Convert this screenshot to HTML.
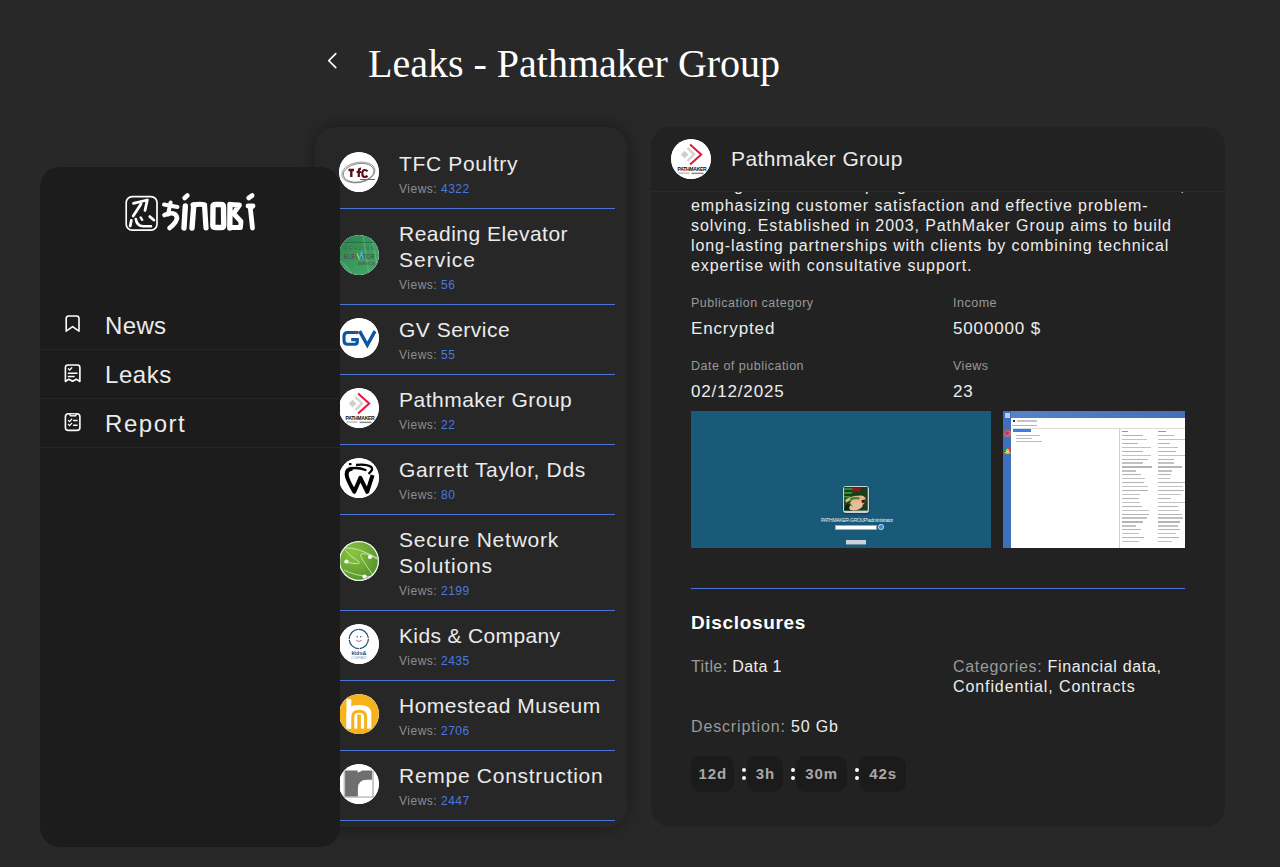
<!DOCTYPE html>
<html><head><meta charset="utf-8">
<style>
*{margin:0;padding:0;box-sizing:border-box}
html,body{width:1280px;height:867px;overflow:hidden;background:#282828;font-family:"Liberation Sans",sans-serif;color:#fff}
.abs{position:absolute}
.t{position:absolute;white-space:nowrap}
#title{left:368px;top:40.2px;font-family:"Liberation Serif",serif;font-size:40px;line-height:48px;color:#fff}
#back{left:320px;top:46px;width:30px;height:30px}
/* list panel */
#list{left:315px;top:127px;width:312px;height:700px;background:#272727;border-radius:20px;box-shadow:0 0 18px rgba(0,0,0,.38);overflow:hidden}
.item{position:absolute;left:24px;width:276px;border-bottom:1px solid #4a74d9}
.av{position:absolute;left:0;width:40px;height:40px;border-radius:50%;overflow:hidden;background:#fff}
.it{position:absolute;left:60px;font-size:21px;line-height:26px;letter-spacing:0.5px;color:#ebebeb;white-space:nowrap}
.iv{position:absolute;left:60px;font-size:12px;line-height:20px;letter-spacing:0.5px;color:#8e8e8e;white-space:nowrap}
.iv b{font-weight:normal;color:#4b78e0}
/* sidebar */
#side{left:40px;top:167px;width:300px;height:680px;background:#1c1c1c;border-radius:20px;overflow:hidden}
.nav{position:absolute;left:0;width:300px;height:49px;border-bottom:1px solid #272727}
.nav .lbl{position:absolute;left:65px;top:1px;font-size:24px;line-height:48px;letter-spacing:0.3px;color:#ebebeb}
.nav svg{position:absolute;left:22px;top:12px}
/* detail */
#det{left:651px;top:127px;width:574px;height:700px;background:#222222;border-radius:20px;overflow:hidden}
#dhead{position:absolute;left:0;top:0;width:574px;height:65px;background:#222222;border-bottom:1px solid #2a2a2a;z-index:2}
.desc{position:absolute;left:40px;font-size:16px;line-height:20px;letter-spacing:0.9px;color:#ededed;white-space:nowrap}
.lab{position:absolute;font-size:12.5px;line-height:16px;letter-spacing:0.5px;color:#999}
.val{position:absolute;font-size:17px;line-height:22px;letter-spacing:0.85px;color:#ededed}
.g{color:#9a9a9a}
.box{position:absolute;top:629px;height:36px;background:#1b1b1b;border-radius:10px;font-weight:bold;font-size:15px;line-height:36px;color:#a8a8a8;text-align:center;letter-spacing:0.9px;padding-left:0.9px}
.dot{position:absolute;width:4px;height:4px;border-radius:50%;background:#fff}
</style></head>
<body>
<div class="t" id="title">Leaks - Pathmaker Group</div>
<svg class="abs" id="back" viewBox="318 46 30 30"><polyline points="333.8,53.6 326.8,60.6 333.8,67.6" fill="none" stroke="#fff" stroke-width="1.6" stroke-linecap="round" stroke-linejoin="round"/></svg>

<div class="abs" id="list">
  <!-- items: top relative to panel (139-127=12) -->
  <div class="item" style="top:12px;height:70px">
    <div class="av" style="top:12.5px"><svg width="40" height="40" viewBox="0 0 40 40"><circle cx="20" cy="20" r="20" fill="#fff"/><ellipse cx="19.4" cy="20.5" rx="16.8" ry="10.2" fill="none" stroke="#8a8a8a" stroke-width="0.8" transform="rotate(-10 19.4 20.5)"/><ellipse cx="19.6" cy="20.8" rx="15.6" ry="9.2" fill="none" stroke="#444" stroke-width="0.6" transform="rotate(-10 19.6 20.8)"/><path d="M9.5 18 H15 M12.3 18 V25" stroke="#5a1013" stroke-width="2.4" fill="none"/><path d="M19.8 25 V18.5 Q19.8 16.6 22 16.6 M17.6 20 H22" stroke="#5a1013" stroke-width="2.2" fill="none"/><path d="M28.5 19.3 Q27.5 18 25.8 18 Q23.3 18 23.3 21.5 Q23.3 25 25.8 25 Q27.5 25 28.5 23.8" stroke="#5a1013" stroke-width="2.2" fill="none"/><rect x="21" y="27" width="15" height="1" fill="#666"/></svg></div>
    <div class="it" style="top:12px;letter-spacing:0.65px">TFC Poultry</div>
    <div class="iv" style="top:40px">Views: <b>4322</b></div>
  </div>
  <div class="item" style="top:82px;height:96px">
    <div class="av" style="top:25.5px"><svg width="40" height="40" viewBox="0 0 40 40"><defs><linearGradient id="gre" x1="0" y1="0" x2="1" y2="1"><stop offset="0" stop-color="#2b8048"/><stop offset="0.5" stop-color="#3a9a5e"/><stop offset="1" stop-color="#45a86b"/></linearGradient></defs><circle cx="20" cy="20" r="20" fill="url(#gre)"/><path d="M24 0 L30 40 M33 2 L38 30 M4 28 L14 40" stroke="#6fcf95" stroke-width="1.3" opacity=".45"/><rect x="4" y="6.8" width="32" height="1.1" fill="#1c5a33" opacity=".55"/><text x="20.5" y="14.9" font-family="Liberation Sans" font-size="4.6" fill="#4f6457" text-anchor="middle" textLength="30" lengthAdjust="spacing">READING</text><text x="20.3" y="24.1" font-family="Liberation Sans" font-weight="bold" font-size="7" fill="#4b5a50" text-anchor="middle" textLength="31" lengthAdjust="spacingAndGlyphs">ELEVATOR</text><path d="M18 18.5 L20.3 24.5" stroke="#b5d334" stroke-width="1.5"/><path d="M20.3 24.5 L22.5 17.5 L24.2 24" stroke="#3fb7e6" stroke-width="1.4" fill="none"/><text x="27.3" y="30.2" font-family="Liberation Sans" font-weight="bold" font-size="3.6" fill="#4b5a50" text-anchor="middle" textLength="17" lengthAdjust="spacing">SERVICE</text></svg></div>
    <div class="it" style="top:12px">Reading Elevator<br><span style="letter-spacing:1px">Service</span></div>
    <div class="iv" style="top:66px">Views: <b>56</b></div>
  </div>
  <div class="item" style="top:178px;height:70px">
    <div class="av" style="top:13px"><svg width="40" height="40" viewBox="0 0 40 40"><circle cx="20" cy="20" r="20" fill="#fff"/><path d="M19.5 14.5 H8.8 Q5 14.5 5 18.3 V22.5 Q5 26.3 8.8 26.3 H15.8 Q18.3 26.3 18.3 23.8 V21.6 H12.2" fill="none" stroke="#0d55a0" stroke-width="3.1"/><path d="M20.6 13.2 L28.3 27 L36 13.2" fill="none" stroke="#0d55a0" stroke-width="3.4" stroke-linejoin="miter"/><path d="M15.6 12.8 L17.8 16.3" stroke="#e3242b" stroke-width="1.2"/></svg></div>
    <div class="it" style="top:12px">GV Service</div>
    <div class="iv" style="top:40px">Views: <b>55</b></div>
  </div>
  <div class="item" style="top:248px;height:70px">
    <div class="av" style="top:13px"><svg width="40" height="40" viewBox="0 0 40 40"><circle cx="20" cy="20" r="20" fill="#fff"/><path d="M9.8 15.6 L13.6 11.8 L17.4 15.6 L13.6 19.4 Z" fill="#cfcfcf"/><path d="M16.4 9 L23 15.5 L16.4 22" fill="none" stroke="#d2d2d2" stroke-width="2.4"/><path d="M19.1 5.4 L30.2 15.5 L19.1 25.6" fill="none" stroke="#e3173a" stroke-width="2"/><text x="21" y="31.6" font-family="Liberation Sans" font-weight="bold" font-size="5.6" fill="#111" text-anchor="middle" letter-spacing="-0.35" textLength="29" lengthAdjust="spacingAndGlyphs">PATHMAKER</text><rect x="7.5" y="33.3" width="11" height="1.6" fill="#c4c4c4"/><rect x="20.5" y="33.6" width="12" height="1.5" fill="#8a8a8a"/></svg></div>
    <div class="it" style="top:12px">Pathmaker Group</div>
    <div class="iv" style="top:40px">Views: <b>22</b></div>
  </div>
  <div class="item" style="top:318px;height:70px">
    <div class="av" style="top:13px"><svg width="40" height="40" viewBox="0 0 40 40"><circle cx="20" cy="20" r="20" fill="#fff"/><path d="M13.5 10.8 Q7.6 10.8 7.6 16.5 Q7.8 21 15.3 33.8 L21.4 19.8 L28.2 33.8 L33.6 17.2" fill="none" stroke="#000" stroke-width="4" stroke-linejoin="round"/><path d="M12.5 10.2 Q20 9.2 26.5 12" fill="none" stroke="#000" stroke-width="2.4" stroke-linecap="round"/><path d="M17 7 Q27.5 5.6 32.5 9.2 Q34.5 12 29.5 15.8" fill="none" stroke="#000" stroke-width="2.3"/><rect x="9.9" y="5" width="2.6" height="2.2" fill="#000"/></svg></div>
    <div class="it" style="top:12px;letter-spacing:0.64px">Garrett Taylor, Dds</div>
    <div class="iv" style="top:40px">Views: <b>80</b></div>
  </div>
  <div class="item" style="top:388px;height:96px">
    <div class="av" style="top:26px"><svg width="40" height="40" viewBox="0 0 40 40"><defs><radialGradient id="gsn" cx="0.35" cy="0.3" r="0.8"><stop offset="0" stop-color="#8cc63f"/><stop offset="1" stop-color="#4f8f2a"/></radialGradient></defs><circle cx="20" cy="20" r="19.3" fill="url(#gsn)" stroke="#e8f3df" stroke-width="1.2"/><path d="M6 7 Q18 6 38 17" fill="none" stroke="#e9f5da" stroke-width="0.7"/><path d="M6 9 Q12 16 19 20 Q23 23 15 22.5 L5 21" fill="none" stroke="#e9f5da" stroke-width="0.7"/><path d="M38 18 Q32 13 24 12.5 Q20 13 23 18 L33 33" fill="none" stroke="#e9f5da" stroke-width="0.7"/><path d="M5 29 Q16 35 35 36" fill="none" stroke="#e9f5da" stroke-width="0.7"/><circle cx="7.5" cy="20.5" r="2.1" fill="#fff"/><circle cx="31" cy="16" r="2.1" fill="#fff"/><circle cx="25.5" cy="35.5" r="2.1" fill="#fff"/></svg></div>
    <div class="it" style="top:12px;letter-spacing:0.76px">Secure Network<br><span style="letter-spacing:0.83px">Solutions</span></div>
    <div class="iv" style="top:66px">Views: <b>2199</b></div>
  </div>
  <div class="item" style="top:484px;height:70px">
    <div class="av" style="top:13px"><svg width="40" height="40" viewBox="0 0 40 40"><circle cx="20" cy="20" r="20" fill="#fff"/><circle cx="19.8" cy="15" r="9.6" fill="none" stroke="#1b4f7a" stroke-width="1.2" stroke-dasharray="14.2 0.9" transform="rotate(-92 19.8 15)"/><rect x="17.6" y="12.2" width="1.3" height="1.1" fill="#1b4f7a"/><rect x="21" y="12.2" width="1.3" height="1.1" fill="#1b4f7a"/><path d="M17.2 16.2 Q19.9 18.8 22.6 16.2" fill="none" stroke="#9b6aa8" stroke-width="1"/><text x="20" y="30.6" font-family="Liberation Sans" font-weight="bold" font-size="5" fill="#1b4f7a" text-anchor="middle" textLength="15" lengthAdjust="spacingAndGlyphs">kids&amp;</text><rect x="15" y="27" width="1.5" height="3.6" fill="#c6a6cf"/><text x="20" y="34.8" font-family="Liberation Sans" font-size="3.6" fill="#7fa3bf" text-anchor="middle" textLength="16" lengthAdjust="spacingAndGlyphs">COMPANY</text></svg></div>
    <div class="it" style="top:12px;letter-spacing:0.36px">Kids &amp; Company</div>
    <div class="iv" style="top:40px">Views: <b>2435</b></div>
  </div>
  <div class="item" style="top:554px;height:70px">
    <div class="av" style="top:13px"><svg width="40" height="40" viewBox="0 0 40 40"><circle cx="20" cy="20" r="20" fill="#f6b31b"/><rect x="7.5" y="5.1" width="4.8" height="29.7" fill="#fff"/><path d="M7.5 34.8 V20 Q7.5 11 20 11 Q32.4 11 32.4 20 V34.8 Z" fill="#fff"/><path d="M13.75 36 V23.2 Q13.75 17.35 20.2 17.35 Q26.6 17.35 26.6 23.2 V36" fill="none" stroke="#f6b31b" stroke-width="3"/><rect x="18.3" y="20.5" width="3.6" height="15" fill="#f6b31b"/><rect x="0" y="34.8" width="40" height="6" fill="#f6b31b"/></svg></div>
    <div class="it" style="top:12px">Homestead Museum</div>
    <div class="iv" style="top:40px">Views: <b>2706</b></div>
  </div>
  <div class="item" style="top:624px;height:70px">
    <div class="av" style="top:13px"><svg width="40" height="40" viewBox="0 0 40 40"><circle cx="20" cy="20" r="20" fill="#fff"/><rect x="4.6" y="6.5" width="1.3" height="27" fill="#b8b8b8"/><rect x="33" y="6.5" width="2" height="27" fill="#c9c9c9"/><rect x="5" y="32.5" width="30" height="1.2" fill="#b5b5b5"/><rect x="6.1" y="6.5" width="26.9" height="26" fill="#6f6f6f"/><path d="M18.9 32.5 V24.5 Q18.9 15.7 28 15.7 H33 V32.5 Z" fill="#fff"/><path d="M18.6 6.5 Q21 4.8 23.4 6.5 Q21 7.8 18.6 8.6 Z" fill="#fff"/></svg></div>
    <div class="it" style="top:12px;letter-spacing:0.72px">Rempe Construction</div>
    <div class="iv" style="top:40px">Views: <b>2447</b></div>
  </div>
</div>

<div class="abs" id="side">
  <svg class="abs" style="left:80px;top:13px" width="140" height="60" viewBox="120 180 140 60">
    <rect x="126.2" y="196.6" width="30.8" height="33.6" rx="6" fill="none" stroke="#fff" stroke-width="1.7"/>
    <g fill="none" stroke="#fff" stroke-linecap="round" stroke-linejoin="round">
      <path d="M133.5 203.4 L147.3 200 L145 210.5" stroke-width="2.8"/>
      <path d="M141 204 L133.2 216" stroke-width="2.8"/>
      <path d="M140.6 217.4 L142.2 219.8" stroke-width="2.4"/>
      <path d="M131.3 220.4 L130.2 226" stroke-width="2.8"/>
      <path d="M135.8 219 Q136.8 226 143 226.2 L151 226.2" stroke-width="2.6"/>
      <path d="M149.8 216.6 L153.8 220" stroke-width="2.8"/>
    </g>
    <g fill="#fff" stroke="#fff" stroke-linecap="round" stroke-linejoin="round">
      <path d="M164 204.5 L177.5 207" stroke-width="4" fill="none"/>
      <path d="M170.6 202.5 L168 214.5" stroke-width="4" fill="none"/>
      <path d="M164.5 215 Q171 212 175 214.2 Q178.5 217.5 175.5 222 Q172.5 226 169.5 228" stroke-width="4.6" fill="none"/>
      <path d="M184.6 198 L187.4 195.5" stroke-width="4.6" fill="none"/>
      <path d="M185.3 206 L184 228" stroke-width="5.4" fill="none"/>
      <path d="M193.8 205 L192 228" stroke-width="5.4" fill="none"/>
      <path d="M193 205 Q201 203.5 204.5 205 L206 228" stroke-width="5.2" fill="none"/>
      <path d="M213 206.5 Q212.5 204.5 215.5 204.5 L221 204.5 Q223.5 204.5 223.5 207 L223.8 225 Q223.8 227.5 221 227.5 L215.5 227.5 Q212.8 227.5 212.8 225 Z" stroke-width="5.4" fill="none"/>
      <path d="M230 204.5 L229.8 228" stroke-width="5.4" fill="none"/>
      <path d="M230 204.5 L239.5 205 L233.5 213.5 L241 221.5 L240.5 227.5 L230.5 227.5" stroke-width="4.8" fill="none"/>
      <path d="M248 206 L253 206 L250.3 208 L252.5 228" stroke-width="4.8" fill="none"/>
      <path d="M248.6 198 L252.2 195.5" stroke-width="4.6" fill="none"/>
    </g>
  </svg>
  <div class="nav" style="top:134px"><svg width="20" height="22" viewBox="62 313 20 22"><path d="M66.2 331.2 V318.6 Q66.2 316 68.8 316 H76.4 Q79 316 79 318.6 V331.2 L72.6 326.6 Z" fill="none" stroke="#fff" stroke-width="1.6" stroke-linejoin="round"/></svg><div class="lbl" style="letter-spacing:0.35px">News</div></div>
  <div class="nav" style="top:183px"><svg width="20" height="22" viewBox="62 362 20 22"><path d="M65.4 381.5 V367.6 Q65.4 365 68 365 H77.3 Q79.9 365 79.9 367.6 V381.5 L76.3 379.2 L72.6 381.3 L68.8 379.2 Z" fill="none" stroke="#fff" stroke-width="1.6" stroke-linejoin="round"/><path d="M68.4 368.7 L69.7 370.1 L71.8 367.7" fill="none" stroke="#fff" stroke-width="1.3" stroke-linecap="round" stroke-linejoin="round"/><path d="M68.4 373.3 H77 M68.4 376.4 H74" stroke="#fff" stroke-width="1.5" stroke-linecap="round"/></svg><div class="lbl" style="letter-spacing:0.55px">Leaks</div></div>
  <div class="nav" style="top:232px"><svg width="20" height="22" viewBox="62 411 20 22"><rect x="65.4" y="413.8" width="14.5" height="16.6" rx="3" fill="none" stroke="#fff" stroke-width="1.6"/><path d="M69.6 413.8 L70.3 415.9 H75.6 L76.6 413.8" fill="#888" stroke="#fff" stroke-width="1.3" stroke-linejoin="round"/><path d="M68.4 420.4 L69.6 421.6 L71.7 419.3 M68.4 424.4 L69.6 425.6 L71.7 423.4" fill="none" stroke="#fff" stroke-width="1.3" stroke-linecap="round" stroke-linejoin="round"/><path d="M73.6 420.4 H77 M73.6 425.3 H77" stroke="#fff" stroke-width="1.5" stroke-linecap="round"/></svg><div class="lbl" style="letter-spacing:1.55px">Report</div></div>
</div>

<div class="abs" id="det">
  <div id="dhead">
    <div class="av" style="left:20px;top:12px"><svg width="40" height="40" viewBox="0 0 40 40"><circle cx="20" cy="20" r="20" fill="#fff"/><path d="M9.8 15.6 L13.6 11.8 L17.4 15.6 L13.6 19.4 Z" fill="#cfcfcf"/><path d="M16.4 9 L23 15.5 L16.4 22" fill="none" stroke="#d2d2d2" stroke-width="2.4"/><path d="M19.1 5.4 L30.2 15.5 L19.1 25.6" fill="none" stroke="#e3173a" stroke-width="2"/><text x="21" y="31.6" font-family="Liberation Sans" font-weight="bold" font-size="5.6" fill="#111" text-anchor="middle" letter-spacing="-0.35" textLength="29" lengthAdjust="spacingAndGlyphs">PATHMAKER</text><rect x="7.5" y="33.3" width="11" height="1.6" fill="#c4c4c4"/><rect x="20.5" y="33.6" width="12" height="1.5" fill="#8a8a8a"/></svg></div>
    <div class="t" style="left:80px;top:19px;font-size:21px;line-height:26px;letter-spacing:0.4px;color:#ebebeb">Pathmaker Group</div>
  </div>
  <div class="desc" style="top:49px;left:83px">g</div><div class="desc" style="top:49px;left:214px">p</div><div class="desc" style="top:49px;left:246px">g</div><div class="desc" style="top:49px;left:529px">,</div>
  <div class="desc" style="top:69px">emphasizing customer satisfaction and effective problem-</div>
  <div class="desc" style="top:89px">solving. Established in 2003, PathMaker Group aims to build</div>
  <div class="desc" style="top:109px">long-lasting partnerships with clients by combining technical</div>
  <div class="desc" style="top:129px">expertise with consultative support.</div>
  <div class="lab" style="left:40px;top:168px">Publication category</div>
  <div class="val" style="left:40px;top:191px">Encrypted</div>
  <div class="lab" style="left:302px;top:168px">Income</div>
  <div class="val" style="left:302px;top:191px">5000000 $</div>
  <div class="lab" style="left:40px;top:231px">Date of publication</div>
  <div class="val" style="left:40px;top:254px">02/12/2025</div>
  <div class="lab" style="left:302px;top:231px">Views</div>
  <div class="val" style="left:302px;top:254px">23</div>
  <div class="abs" id="img1" style="left:40px;top:284px;width:300px;height:137px;background:#195a78;overflow:hidden">
    <div class="abs" style="left:151.5px;top:74.5px;width:26.5px;height:27.5px;border-radius:3px;background:#c6d6dc;box-shadow:0 1px 2px rgba(0,0,0,.4)"></div>
    <svg class="abs" style="left:153px;top:76.2px" width="23.8" height="23.6" viewBox="0 0 24 24"><rect width="24" height="24" fill="#183f1c"/><path d="M0 2 H9 M0 6 H8 M0 10 H6" stroke="#3c9a3e" stroke-width="1.6"/><path d="M1 20 Q4 16 9 17 L11 24 H0 Z" fill="#0d240f"/><ellipse cx="14" cy="15" rx="8.5" ry="5.5" transform="rotate(-28 14 15)" fill="#e7b78c"/><path d="M1 13 Q7 9 14 9 L15 12 Q8 12 2 16 Z" fill="#e2ad80"/><ellipse cx="12" cy="20" rx="7" ry="3.6" transform="rotate(-15 12 20)" fill="#e9bd95"/><path d="M8.5 1 Q12 -0.5 17.5 1.2 L16 5 Q12 3.5 9 5.5 Z" fill="#8c1b14"/><path d="M6 11.5 Q11 9.5 16 10.8 L15.5 12.8 Q11 12 6.5 14 Z" fill="#2c8a2e"/><path d="M17.5 13.5 L22 12.5 L21.5 15.5 L18.5 16.5 Z" fill="#5a1210"/><path d="M4 14 Q5 19 9 20" fill="#2a6e2a"/></svg>
    <div class="abs" style="left:130px;top:106.5px;width:70px;height:5px;font-size:5px;line-height:5px;color:#e6eef2;white-space:nowrap;letter-spacing:-0.3px">PATHMAKER-GROUP\administrator</div>
    <div class="abs" style="left:144px;top:113.5px;width:42px;height:5px;background:#fff;border:0.5px solid #9ab"></div>
    <div class="abs" style="left:187px;top:113px;width:5.5px;height:5.5px;border-radius:50%;background:#3a86d8;border:1px solid #cfe3f5"></div>
    <div class="abs" style="left:155px;top:129px;width:20px;height:4.5px;background:#c9d3d8;border-bottom:1px solid #6f8c99"></div>
  </div>
  <div class="abs" id="img2" style="left:352px;top:284px;width:182px;height:137px;background:#fff;overflow:hidden">
    <div class="abs" style="left:0;top:0;width:8px;height:137px;background:#3f6fbd"></div>
    <div class="abs" style="left:1.5px;top:2px;width:5px;height:5px;background:#b9cde6"></div>
    <div class="abs" style="left:0.5px;top:18.5px;width:7px;height:7px;border-radius:50%;background:#e86a2a"></div>
    <div class="abs" style="left:2px;top:19.5px;width:4px;height:4px;border-radius:50%;background:#8c3dc2"></div>
    <div class="abs" style="left:0.5px;top:36px;width:7px;height:7px;border-radius:50%;background:conic-gradient(#db4437 0 33%,#f4c20d 0 66%,#0f9d58 0)"></div>
    <div class="abs" style="left:2.5px;top:38px;width:3px;height:3px;border-radius:50%;background:#4285f4;border:0.5px solid #fff"></div>
    <div class="abs" style="left:8px;top:0;width:174px;height:7px;background:linear-gradient(90deg,#5582c8,#4270b9)"></div>
    <div class="abs" style="left:10px;top:9px;width:2px;height:2px;background:#335"></div>
    <div class="abs" style="left:14px;top:9.3px;width:20px;height:1.5px;background:#c4c4c4"></div>
    <div class="abs" style="left:9px;top:13.5px;width:25px;height:1.5px;background:#b5b5b5"></div>
    <div class="abs" style="left:8px;top:16.5px;width:174px;height:0.8px;background:#dcdcdc"></div>
    <div class="abs" style="left:10px;top:18px;width:18px;height:3px;background:#3b7de0"></div>
    <div class="abs" style="left:13px;top:23.5px;width:24px;height:1.4px;background:#bbb"></div>
    <div class="abs" style="left:13px;top:26.5px;width:16px;height:1.4px;background:#bbb"></div>
    <div class="abs" style="left:13px;top:30px;width:26px;height:1.4px;background:#bbb"></div>
    <div class="abs" style="left:116px;top:17px;width:0.8px;height:120px;background:#cfcfcf"></div>
    <div class="abs" style="left:119px;top:19.5px;width:6px;height:1.4px;background:#999"></div>
    <div class="abs" style="left:155px;top:19.5px;width:8px;height:1.4px;background:#999"></div>
    <div class="abs" style="left:119px;top:23.9px;width:21px;height:1.3px;background:#b4b4b4"></div><div class="abs" style="left:155px;top:23.9px;width:16px;height:1.3px;background:#b4b4b4"></div><div class="abs" style="left:119px;top:27.8px;width:25px;height:1.3px;background:#c2c2c2"></div><div class="abs" style="left:155px;top:27.8px;width:27px;height:1.3px;background:#c2c2c2"></div><div class="abs" style="left:119px;top:31.8px;width:16px;height:1.3px;background:#b4b4b4"></div><div class="abs" style="left:155px;top:31.8px;width:12px;height:1.3px;background:#b4b4b4"></div><div class="abs" style="left:119px;top:35.7px;width:29px;height:1.3px;background:#c2c2c2"></div><div class="abs" style="left:155px;top:35.7px;width:20px;height:1.3px;background:#c2c2c2"></div><div class="abs" style="left:119px;top:39.6px;width:21px;height:1.3px;background:#b4b4b4"></div><div class="abs" style="left:155px;top:39.6px;width:18px;height:1.3px;background:#b4b4b4"></div><div class="abs" style="left:119px;top:43.5px;width:29px;height:1.3px;background:#c2c2c2"></div><div class="abs" style="left:155px;top:43.5px;width:27px;height:1.3px;background:#c2c2c2"></div><div class="abs" style="left:119px;top:47.5px;width:26px;height:1.3px;background:#b4b4b4"></div><div class="abs" style="left:155px;top:47.5px;width:16px;height:1.3px;background:#b4b4b4"></div><div class="abs" style="left:119px;top:51.4px;width:21px;height:1.3px;background:#c2c2c2"></div><div class="abs" style="left:155px;top:51.4px;width:16px;height:1.3px;background:#c2c2c2"></div><div class="abs" style="left:119px;top:55.3px;width:30px;height:1.3px;background:#b4b4b4"></div><div class="abs" style="left:155px;top:55.3px;width:24px;height:1.3px;background:#b4b4b4"></div><div class="abs" style="left:119px;top:59.3px;width:14px;height:1.3px;background:#c2c2c2"></div><div class="abs" style="left:155px;top:59.3px;width:14px;height:1.3px;background:#c2c2c2"></div><div class="abs" style="left:119px;top:63.2px;width:19px;height:1.3px;background:#b4b4b4"></div><div class="abs" style="left:155px;top:63.2px;width:13px;height:1.3px;background:#b4b4b4"></div><div class="abs" style="left:119px;top:67.1px;width:23px;height:1.3px;background:#c2c2c2"></div><div class="abs" style="left:155px;top:67.1px;width:12px;height:1.3px;background:#c2c2c2"></div><div class="abs" style="left:119px;top:71.1px;width:22px;height:1.3px;background:#b4b4b4"></div><div class="abs" style="left:155px;top:71.1px;width:27px;height:1.3px;background:#b4b4b4"></div><div class="abs" style="left:119px;top:75.0px;width:26px;height:1.3px;background:#c2c2c2"></div><div class="abs" style="left:155px;top:75.0px;width:25px;height:1.3px;background:#c2c2c2"></div><div class="abs" style="left:119px;top:78.9px;width:26px;height:1.3px;background:#b4b4b4"></div><div class="abs" style="left:155px;top:78.9px;width:26px;height:1.3px;background:#b4b4b4"></div><div class="abs" style="left:119px;top:82.8px;width:18px;height:1.3px;background:#c2c2c2"></div><div class="abs" style="left:155px;top:82.8px;width:23px;height:1.3px;background:#c2c2c2"></div><div class="abs" style="left:119px;top:86.8px;width:17px;height:1.3px;background:#b4b4b4"></div><div class="abs" style="left:155px;top:86.8px;width:13px;height:1.3px;background:#b4b4b4"></div><div class="abs" style="left:119px;top:90.7px;width:18px;height:1.3px;background:#c2c2c2"></div><div class="abs" style="left:155px;top:90.7px;width:27px;height:1.3px;background:#c2c2c2"></div><div class="abs" style="left:119px;top:94.6px;width:20px;height:1.3px;background:#b4b4b4"></div><div class="abs" style="left:155px;top:94.6px;width:20px;height:1.3px;background:#b4b4b4"></div><div class="abs" style="left:119px;top:98.6px;width:27px;height:1.3px;background:#c2c2c2"></div><div class="abs" style="left:155px;top:98.6px;width:21px;height:1.3px;background:#c2c2c2"></div><div class="abs" style="left:119px;top:102.5px;width:27px;height:1.3px;background:#b4b4b4"></div><div class="abs" style="left:155px;top:102.5px;width:24px;height:1.3px;background:#b4b4b4"></div><div class="abs" style="left:119px;top:106.4px;width:25px;height:1.3px;background:#c2c2c2"></div><div class="abs" style="left:155px;top:106.4px;width:25px;height:1.3px;background:#c2c2c2"></div><div class="abs" style="left:119px;top:110.4px;width:21px;height:1.3px;background:#b4b4b4"></div><div class="abs" style="left:155px;top:110.4px;width:22px;height:1.3px;background:#b4b4b4"></div><div class="abs" style="left:119px;top:114.3px;width:14px;height:1.3px;background:#c2c2c2"></div><div class="abs" style="left:155px;top:114.3px;width:20px;height:1.3px;background:#c2c2c2"></div><div class="abs" style="left:119px;top:118.2px;width:19px;height:1.3px;background:#b4b4b4"></div><div class="abs" style="left:155px;top:118.2px;width:22px;height:1.3px;background:#b4b4b4"></div><div class="abs" style="left:119px;top:122.1px;width:17px;height:1.3px;background:#c2c2c2"></div><div class="abs" style="left:155px;top:122.1px;width:18px;height:1.3px;background:#c2c2c2"></div><div class="abs" style="left:119px;top:126.1px;width:22px;height:1.3px;background:#b4b4b4"></div><div class="abs" style="left:155px;top:126.1px;width:21px;height:1.3px;background:#b4b4b4"></div><div class="abs" style="left:119px;top:130.0px;width:17px;height:1.3px;background:#c2c2c2"></div><div class="abs" style="left:155px;top:130.0px;width:14px;height:1.3px;background:#c2c2c2"></div>
  </div>
  <div class="abs" style="left:40px;top:461px;width:494px;height:1px;background:#4a74d9"></div>
  <div class="t" style="left:40px;top:483px;font-weight:bold;font-size:19px;line-height:26px;letter-spacing:0.65px">Disclosures</div>
  <div class="desc" style="top:529.5px;letter-spacing:0.4px"><span class="g">Title:</span> Data 1</div>
  <div class="desc" style="left:302px;top:529.5px;letter-spacing:0.68px"><span class="g">Categories:</span> Financial data,</div>
  <div class="desc" style="left:302px;top:549.5px;letter-spacing:0.9px">Confidential, Contracts</div>
  <div class="desc" style="top:589.5px;letter-spacing:0.85px"><span class="g">Description:</span> 50 Gb</div>
  <div class="box" style="left:40px;width:42.5px">12d</div>
  <div class="dot" style="left:90.5px;top:640.5px"></div><div class="dot" style="left:90.5px;top:648.5px"></div>
  <div class="box" style="left:96px;width:36px">3h</div>
  <div class="dot" style="left:139.8px;top:640.5px"></div><div class="dot" style="left:139.8px;top:648.5px"></div>
  <div class="box" style="left:144.6px;width:51.2px">30m</div>
  <div class="dot" style="left:203.6px;top:640.5px"></div><div class="dot" style="left:203.6px;top:648.5px"></div>
  <div class="box" style="left:208.4px;width:46.6px">42s</div>
</div>
</body></html>
